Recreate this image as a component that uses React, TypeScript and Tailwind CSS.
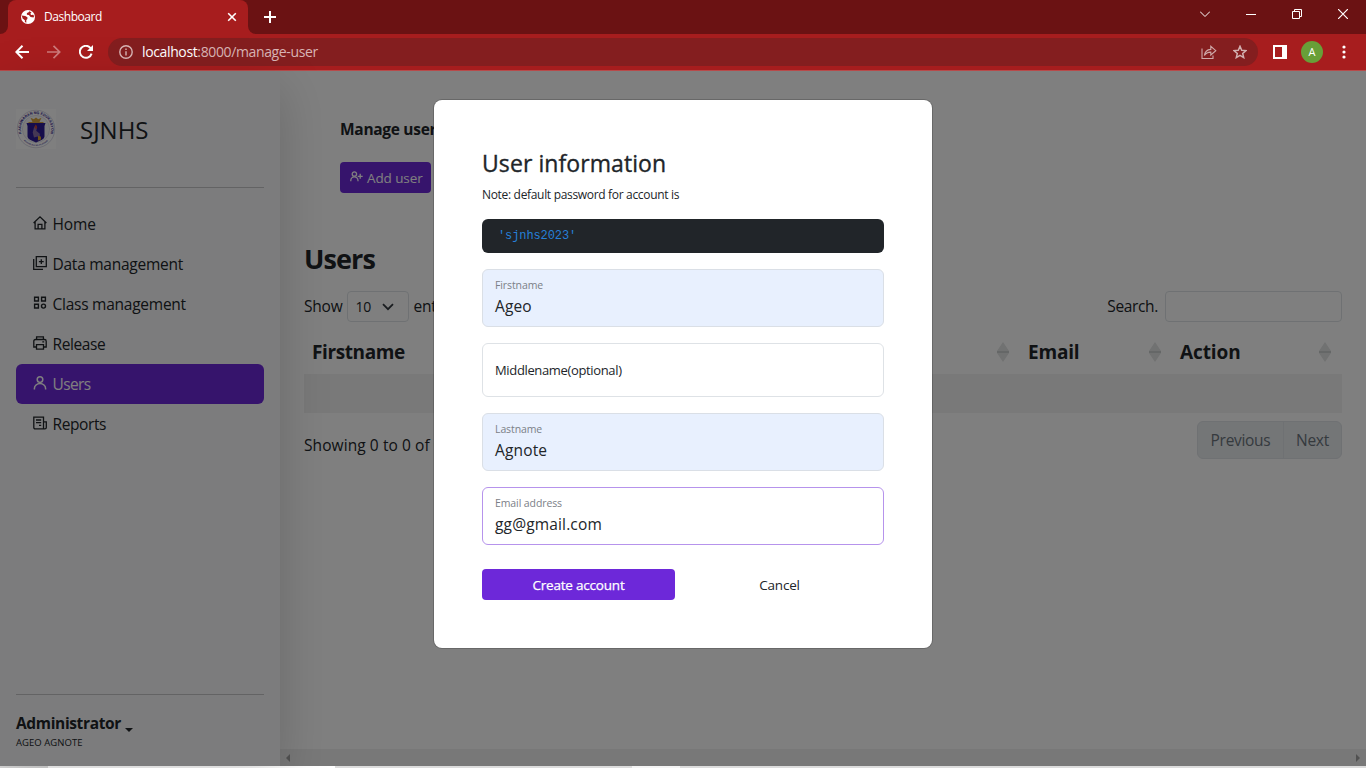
import React from "react";

const stroke = { fill: "none", stroke: "currentColor", strokeWidth: 1.3 } as const;

function HomeIcon() {
  return (
    <svg width="14" height="14" viewBox="0 0 14 14" {...stroke}>
      <path d="M.6 7 7 .9 13.4 7M2.1 5.8v7.1h9.8V5.8M5.1 12.9V8.3h3.8v4.6" />
    </svg>
  );
}

function DataIcon() {
  return (
    <svg width="14" height="14" viewBox="0 0 14 14" {...stroke}>
      <path d="M3.3.7h10v10h-10zM.7 3v10.3H10M8.3 3.3v4.8M5.9 5.7h4.8" />
    </svg>
  );
}

function GridIcon() {
  return (
    <svg width="14" height="14" viewBox="0 0 14 14" {...stroke} strokeWidth={1.4}>
      <path d="M1.6 1.2h3.8V5H1.6zM8.6 1.2h3.8V5H8.6zM1.6 8.2h3.8V12H1.6z" />
      <circle cx="10.5" cy="10.1" r="2" />
    </svg>
  );
}

function PrinterIcon() {
  return (
    <svg width="14" height="14" viewBox="0 0 14 14" {...stroke}>
      <path d="M3.6 3.5V.8h6.8v2.7M3.4 11H.8V5.2q0-1.7 1.7-1.7h9q1.7 0 1.7 1.7V11h-2.6M3.5 8.6h7v4.6h-7zM9.3 5.9h1.9" />
    </svg>
  );
}

function UserIcon() {
  return (
    <svg width="14" height="14" viewBox="0 0 14 14" {...stroke} strokeWidth={1.5}>
      <circle cx="7" cy="3.6" r="2.8" />
      <path d="M1.4 13.4v-.8a5.6 5 0 0 1 11.2 0v.8" />
    </svg>
  );
}

function ReportIcon() {
  return (
    <svg width="14" height="14" viewBox="0 0 14 14" {...stroke}>
      <path d="M.8 1.2h9.7v11.6H2.2Q.8 12.8.8 11.4zM10.5 5.8h2.8v5.6q0 1.4-1.4 1.4h-1.4M3 4h5.2M3 6.6h5.2M6 9.4h2.2" />
    </svg>
  );
}

function AddUserIcon() {
  return (
    <svg width="13" height="11" viewBox="0 0 13 11" {...stroke}>
      <circle cx="4.4" cy="3" r="2.2" />
      <path d="M.8 10.2v-.8a3.6 3.6 0 0 1 7.2 0v.8M10.2 2.8v5M7.7 5.3h5" />
    </svg>
  );
}

function Seal() {
  return (
    <svg width="40" height="40" viewBox="0 0 40 40" className="bg-white">
      <defs>
        <path id="arcTop" d="M6.9 27.6A15.1 15.1 0 1 1 33.1 27.6" />
        <path id="arcBottom" d="M7.3 31.2A16.9 16.9 0 0 0 32.7 31.2" />
      </defs>
      <circle cx="20" cy="20" r="18.8" fill="#fff" stroke="#bdbbd2" strokeWidth=".6" />
      <circle cx="20" cy="20" r="13.6" fill="#f6f6f8" stroke="#c9c7dc" strokeWidth=".5" />
      <text fontFamily="Liberation Sans" fontSize="3.7" fontWeight="700" fill="#30208f">
        <textPath href="#arcTop" startOffset="50%" textAnchor="middle">
          KAGAWARAN NG EDUKASYON
        </textPath>
      </text>
      <text fontFamily="Liberation Sans" fontSize="2.1" fontWeight="700" fill="#5a50a5">
        <textPath href="#arcBottom" startOffset="50%" textAnchor="middle">
          REPUBLIKA NG PILIPINAS
        </textPath>
      </text>
      <path d="M12.5 13h4l-2-4.3 3.3 1.5L20 8.4l2.2 1.8 3.3-1.5-2 4.3h4v1.5h-15z" fill="#d8a23b" />
      <path d="M10.5 14h19l-1 3v10.5q0 2-2.5 3.2L20 33.5l-6-2.8q-2.5-1.2-2.5-3.2V17z" fill="#2c1a97" />
      <path d="M18 18.5q2-3 3.2.2l-1 3 3.6 3v4.5l-2.3-1.6-3.5.9-1.3-5z" fill="#8b6fa8" />
      <path d="M19.5 15.5q2.6 2 1 4.8l-2.2-1.8z" fill="#c4453a" />
      <path d="m22 27 2.8.6.3 3-3.2 1z" fill="#e0a92f" />
    </svg>
  );
}

function SortArrows() {
  return (
    <svg width="12" height="20" viewBox="0 0 12 20" className="text-[#e2e4e4]">
      <path d="M6 0l6 9H0zM6 20l6-9H0z" fill="currentColor" />
      <path d="M0 9h12v2H0z" fill="#cbcfcf" />
    </svg>
  );
}

const nav = [
  { label: "Home", icon: <HomeIcon />, text: "tracking-[-0.1px]" },
  { label: "Data management", icon: <DataIcon />, text: "tracking-[-0.25px]" },
  { label: "Class management", icon: <GridIcon />, text: "tracking-[-0.25px]" },
  { label: "Release", icon: <PrinterIcon />, text: "tracking-[-0.4px]" },
  { label: "Users", icon: <UserIcon />, text: "tracking-[-0.6px]", active: true },
  { label: "Reports", icon: <ReportIcon />, text: "tracking-[-0.4px]" },
];

function BrowserChrome() {
  return (
    <header className="h-[71px] shrink-0 border-b border-[#b84a4a] bg-[#a71d1e] text-white">
      <div className="flex h-[34px] bg-[#6b1213]">
        <div className="flex w-2 items-end bg-[#a71d1e]">
          <div className="h-full w-full rounded-br-lg bg-[#6b1213]" />
        </div>
        <div className="flex w-[240px] items-center rounded-t-lg bg-[#a71d1e] pl-3">
          <svg width="16" height="16" viewBox="0 0 16 16">
            <circle cx="8" cy="8" r="7" fill="#fff" />
            <path d="M1.8 6.6l3.4.3 2.2 1.3v1.9l-1.1 1v2.7L4.9 13v-1.8L2.6 9.4zM9.4 2.2 8.3 3.6 6.9 4v1.7l2 .2 1.7 2.2 2.9.4.6-1.6-.9-1.2-2.1.3-.8-1.2 1.2-1.2z" fill="#a71d1e" />
          </svg>
          <span className="ml-2 flex-1 text-[12px] tracking-[-0.45px]">Dashboard</span>
          <svg width="10" height="10" viewBox="0 0 10 10" className="mr-[11px]" stroke="#fff" strokeWidth="1.6">
            <path d="m1.2 1.2 7.6 7.6M8.8 1.2 1.2 8.8" />
          </svg>
        </div>
        <div className="w-2 bg-[#a71d1e]">
          <div className="h-full w-full rounded-bl-lg bg-[#6b1213]" />
        </div>
        <div className="flex flex-1 items-center pl-2">
          <svg width="12" height="12" viewBox="0 0 12 12" stroke="#fff" strokeWidth="2">
            <path d="M6 0v12M0 6h12" />
          </svg>
        </div>
        <div className="flex items-start gap-9 pr-[18px] pt-[9px]">
          <svg width="10" height="10" viewBox="0 0 10 10" fill="none" stroke="#fff" strokeWidth="1">
            <path d="m0 2.5 5 5 5-5" />
          </svg>
          <svg width="10" height="10" viewBox="0 0 10 10" fill="none" stroke="#fff">
            <path d="M0 5.5h10" />
          </svg>
          <svg width="10" height="10" viewBox="0 0 10 10" fill="none" stroke="#fff">
            <path d="M.5 2.5h7v7h-7zM2.5 2.5v-2h7v7h-2" />
          </svg>
          <svg width="10" height="10" viewBox="0 0 10 10" fill="none" stroke="#fff" strokeWidth="1.2">
            <path d="m0 0 10 10M10 0 0 10" />
          </svg>
        </div>
      </div>
      <div className="flex h-9 items-center pl-[15px] pr-3">
        <svg width="14" height="14" viewBox="0 0 14 14" fill="none" stroke="#fff" strokeWidth="2">
          <path d="M14 7H1.5M7.5.8 1.3 7l6.2 6.2" />
        </svg>
        <svg width="14" height="14" viewBox="0 0 14 14" fill="none" stroke="#cd7b7b" strokeWidth="1.7" className="ml-[18px]">
          <path d="M0 7h12.5M6.5.8 12.7 7l-6.2 6.2" />
        </svg>
        <svg width="14" height="14" viewBox="0 0 14 14" fill="none" stroke="#fff" strokeWidth="2" className="ml-[18px]">
          <path d="M12.6 8.6A6 6 0 1 1 11.3 2.8L12.6 4" />
          <path d="M14 0v6H8z" fill="#fff" stroke="none" />
        </svg>
        <div className="ml-[15px] flex h-7 flex-1 items-center rounded-full bg-[#841e1f] pl-[11px] pr-[11px]">
          <svg width="14" height="14" viewBox="0 0 14 14" fill="none" stroke="#d9b5b5" strokeWidth="1.4">
            <circle cx="7" cy="7" r="6.2" />
            <path d="M7 6.2v4.2M7 3.5V5" />
          </svg>
          <span className="mb-px ml-[9px] flex-1 text-[14px] tracking-[-0.37px] text-[#d9b5b5]">
            <span className="text-white">localhost</span>:8000/manage-user
          </span>
          <svg width="16" height="16" viewBox="0 0 16 16" fill="none" stroke="#cfa9a9" strokeWidth="1.1" className="mr-4">
            <path d="M1 4.5v10h11v-3M3.4 11.5q.6-5.6 6.4-6.1V2.3l5 4.4-5 4.3V8.1q-4-.2-6.4 3.4z" />
          </svg>
          <svg width="14" height="14" viewBox="0 0 14 14" fill="none" stroke="#d2b0b0" strokeWidth="1.5">
            <path d="m7 1.3 1.7 3.9 4.2.4-3.2 2.8 1 4.2L7 10.4l-3.7 2.2 1-4.2L1.1 5.6l4.2-.4z" />
          </svg>
        </div>
        <svg width="14" height="14" viewBox="0 0 14 14" className="ml-[15px]">
          <path d="M0 0h14v14H0zM2 2v10h7V2z" fill="#fff" fillRule="evenodd" />
        </svg>
        <div className="ml-[14px] flex size-[22px] items-center justify-center rounded-full bg-[#689f38] text-[11px]">A</div>
        <svg width="4" height="14" viewBox="0 0 4 14" fill="#fff" className="ml-[19px] mr-2">
          <circle cx="2" cy="2" r="1.6" />
          <circle cx="2" cy="7" r="1.6" />
          <circle cx="2" cy="12" r="1.6" />
        </svg>
      </div>
    </header>
  );
}

function Sidebar() {
  return (
    <aside className="z-10 flex w-[280px] shrink-0 flex-col bg-[#f8f9fa] px-4 shadow-[0_16px_48px_rgba(0,0,0,0.175)]">
      <div className="mt-[38px] flex h-10 items-center">
        <Seal />
        <span className="ml-6 mt-[2px] text-[24px] leading-none">SJNHS</span>
      </div>
      <div className="mt-[38px] h-px bg-[#c6c7c8]" />
      <nav className="mt-4">
        {nav.map((item) => (
          <a
            key={item.label}
            className={
              item.active
                ? "flex h-10 items-center rounded-md bg-[#6d28d9] pl-[17px] text-white"
                : "flex h-10 items-center pl-[17px]"
            }
          >
            <span className="mb-[3px]">{item.icon}</span>
            <span className={`ml-[5.5px] mt-[2px] text-[15.5px] ${item.text}`}>{item.label}</span>
          </a>
        ))}
      </nav>
      <div className="mt-auto h-px bg-[#c6c7c8]" />
      <div className="h-[71px] pt-[16px]">
        <div className="flex items-center text-[15.5px] font-bold leading-6 tracking-[-0.35px]">
          Administrator
          <span className="ml-1 mt-[14px] border-x-4 border-t-4 border-x-transparent border-t-[#212529]" />
        </div>
        <div className="mt-[2px] text-[9.5px] leading-3 tracking-[0.05px]">AGEO AGNOTE</div>
      </div>
    </aside>
  );
}

function Main() {
  return (
    <main className="flex flex-1 flex-col overflow-hidden">
      <div className="flex flex-1 flex-col px-6 text-[15.5px]">
        <div className="pl-9 pt-[46px]">
          <div className="text-[15.5px] font-bold leading-6 tracking-[-0.3px]">Manage users</div>
          <button className="mt-[21px] flex h-[31px] w-[91px] items-center rounded-[4px] bg-[#6d28d9] pl-[10px] text-[13.5px] text-white">
            <span className="mb-[3px]">
              <AddUserIcon />
            </span>
            <span className="ml-[4px] mt-[2px] whitespace-nowrap tracking-[-0.1px]">Add user</span>
          </button>
        </div>
        <h2 className="mt-[49px] text-[27px] font-bold leading-[34px] tracking-[-0.9px]">Users</h2>
        <div className="mt-[15px] flex h-[31px] items-center justify-between">
          <div className="flex items-center whitespace-nowrap tracking-[-0.2px]">
            Show
            <div className="ml-[4px] mr-[5px] flex h-[31px] w-[62px] items-center justify-between rounded-[4px] border border-[#dee2e6] pl-2 pr-[14px] text-[14px]">
              10
              <svg width="12" height="8" viewBox="0 0 12 8" fill="none" stroke="#343a40" strokeWidth="1.8">
                <path d="m1 1.2 5 5 5-5" />
              </svg>
            </div>
            entries
          </div>
          <div className="flex items-center tracking-[-0.35px]">
            Search.
            <div className="ml-[7px] h-[31px] w-[177px] rounded-[4px] border border-[#dee2e6]" />
          </div>
        </div>
        <div className="mt-2 flex h-[44px] items-center text-[19px] font-bold">
          <div className="flex w-[716px] items-center justify-between pl-2 pr-[11px] tracking-[-0.4px]">
            Firstname
            <SortArrows />
          </div>
          <div className="flex w-[152px] items-center justify-between pl-2 pr-[11px] tracking-[-0.2px]">
            Email
            <SortArrows />
          </div>
          <div className="flex flex-1 items-center justify-between pl-[8px] pr-[11px] tracking-[-0.1px]">
            Action
            <SortArrows />
          </div>
        </div>
        <div className="h-[39px] bg-[#f2f2f2]" />
        <div className="mt-2 flex h-[38px] justify-between">
          <span className="mt-[13px] tracking-[0.08px]">Showing 0 to 0 of 0 entries</span>
          <div className="flex overflow-hidden rounded-md border border-[#dee2e6] bg-[#e9ecef] tracking-[-0.3px] text-[#6c757d]">
            <div className="flex w-[86px] items-center justify-center border-r border-[#dee2e6] pt-[2px]">Previous</div>
            <div className="flex w-[57px] items-center justify-center pt-[2px]">Next</div>
          </div>
        </div>
      </div>
      <div className="flex h-[17px] items-center justify-between bg-[#f1f1f1] pl-[6px] pr-[6px]">
        <span className="border-y-4 border-r-4 border-y-transparent border-r-[#a3a3a3]" />
        <span className="border-y-4 border-l-4 border-y-transparent border-l-[#a3a3a3]" />
      </div>
    </main>
  );
}

function Field({ label, value, focused }: { label: string; value: string; focused?: boolean }) {
  return (
    <div
      className={
        focused
          ? "mb-4 h-[58px] rounded-md border border-[#b693ec] bg-white px-3 pt-[7px]"
          : "mb-4 h-[58px] rounded-md border border-[#dadfe6] bg-[#e8f0fe] px-3 pt-[7px]"
      }
    >
      <div className="text-[10.5px] leading-4 tracking-[-0.1px] text-[#7b8087]">{label}</div>
      <div className="mt-px text-[15.5px] leading-6 tracking-[0.15px]">{value}</div>
    </div>
  );
}

function UserModal() {
  return (
    <div className="absolute inset-0 z-20 flex items-start justify-center bg-black/50 pt-[29px]">
      <div className="h-[548px] w-[498px] rounded-lg bg-white bg-clip-padding px-12 pt-[47px] shadow-[0_0_0_1px_rgba(0,0,0,0.18)]">
        <h1 className="text-[23px] leading-8 tracking-[0.08px] [-webkit-text-stroke:0.35px_#212529]">User information</h1>
        <p className="mt-[8px] text-[12px] leading-4 tracking-[-0.32px]">Note: default password for account is</p>
        <div className="mb-4 mt-4 h-[34px] rounded-md bg-[#212529] pl-4 font-['Courier_New','Liberation_Mono',monospace] text-[12px] leading-[35px] tracking-[-0.1px] text-[#2680d8]">
          'sjnhs2023'
        </div>
        <Field label="Firstname" value="Ageo" />
        <div className="mb-4 flex h-[54px] items-center rounded-md border border-[#dee2e6] px-3 pt-[2px] text-[13px] tracking-[-0.35px]">
          Middlename(optional)
        </div>
        <Field label="Lastname" value="Agnote" />
        <Field label="Email address" value="gg@gmail.com" focused />
        <div className="mt-6 flex gap-4 text-[13.5px] tracking-[-0.2px]">
          <button className="h-[31px] w-[193px] rounded-[4px] bg-[#6d28d9] pt-[2px] text-white [-webkit-text-stroke:0.25px_#fff]">
            Create account
          </button>
          <button className="h-[31px] w-[177px] pt-[2px]">Cancel</button>
        </div>
      </div>
    </div>
  );
}

export default function App() {
  return (
    <div className="flex h-[768px] w-[1366px] flex-col overflow-hidden bg-white font-['Open_Sans','Noto_Sans',sans-serif] text-[#212529]">
      <BrowserChrome />
      <div className="relative flex h-[695px] shrink-0">
        <Sidebar />
        <Main />
        <UserModal />
      </div>
      <div className="flex h-[2px] bg-[#dcdcdc]">
        <div className="ml-12 w-[287px] bg-white" />
        <div className="ml-[297px] w-12 bg-[#f4f4f4]" />
      </div>
    </div>
  );
}
